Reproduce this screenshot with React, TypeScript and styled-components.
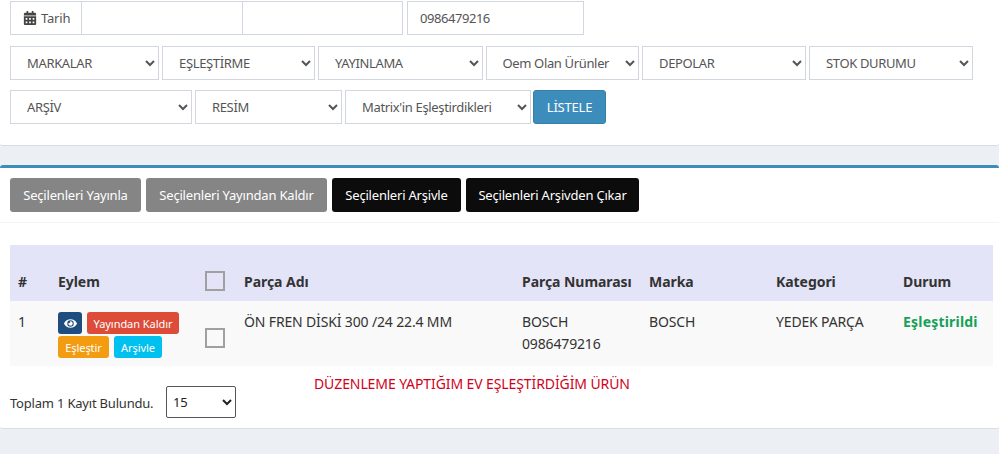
import styled, { createGlobalStyle } from "styled-components"
import { FaCalendarAlt, FaEye } from "react-icons/fa"

const GlobalStyle = createGlobalStyle`
html,body{
  margin:0;
  padding:0;
  background:#ecf0f5;
  font-family:"Noto Sans","Liberation Sans",sans-serif;
  font-size:13px;
  letter-spacing:-0.2px;
  color:#333;
}
*{box-sizing:border-box;}
button,input,select{letter-spacing:inherit;}
`

const filterRow2 = [
  { label: "MARKALAR", width: 149 },
  { label: "EŞLEŞTİRME", width: 153 },
  { label: "YAYINLAMA", width: 164.5 },
  { label: "Oem Olan Ürünler", width: 153.5 },
  { label: "DEPOLAR", width: 164 },
  { label: "STOK DURUMU", width: 164 },
]

const filterRow3 = [
  { label: "ARŞİV", width: 182 },
  { label: "RESİM", width: 147 },
  { label: "Matrix'in Eşleştirdikleri", width: 186 },
]

const App = () => {
  return (
    <Page>
      <GlobalStyle />
      <FilterPanel>
        <Row>
          <DateGroup>
            <Addon>
              <FaCalendarAlt />
              Tarih
            </Addon>
            <TextInput $width={162} readOnly />
            <TextInput $width={161} readOnly />
          </DateGroup>
          <TextInput $width={177} readOnly value="0986479216" />
        </Row>
        <Row>
          {filterRow2.map((item) => (
            <Select key={item.label} $width={item.width}>
              <option>{item.label}</option>
            </Select>
          ))}
        </Row>
        <Row>
          {filterRow3.map((item) => (
            <Select key={item.label} $width={item.width}>
              <option>{item.label}</option>
            </Select>
          ))}
          <ListButton>LİSTELE</ListButton>
        </Row>
      </FilterPanel>

      <ResultPanel>
        <Toolbar>
          <BulkButton $bg="#858585" $width={131}>Seçilenleri Yayınla</BulkButton>
          <BulkButton $bg="#858585" $width={181}>Seçilenleri Yayından Kaldır</BulkButton>
          <BulkButton $bg="#0c0c0c" $width={129}>Seçilenleri Arşivle</BulkButton>
          <BulkButton $bg="#0c0c0c" $width={173}>Seçilenleri Arşivden Çıkar</BulkButton>
        </Toolbar>

        <Body>
          <Table>
            <colgroup>
              <col width={40} />
              <col width={147} />
              <col width={39} />
              <col width={278} />
              <col width={127} />
              <col width={127} />
              <col width={127} />
              <col width={98} />
            </colgroup>
            <thead>
              <tr>
                <Th>#</Th>
                <Th>Eylem</Th>
                <Th><Check /></Th>
                <Th>Parça Adı</Th>
                <Th>Parça Numarası</Th>
                <Th>Marka</Th>
                <Th>Kategori</Th>
                <Th>Durum</Th>
              </tr>
            </thead>
            <tbody>
              <tr>
                <Td>1</Td>
                <ActionTd>
                  <Actions>
                    <ActionButton $bg="#204d7f" $width={24}><FaEye /></ActionButton>
                    <ActionButton $bg="#dd4b39" $width={92}>Yayından Kaldır</ActionButton>
                    <ActionButton $bg="#f39c12" $width={51}>Eşleştir</ActionButton>
                    <ActionButton $bg="#00c0ef" $width={48}>Arşivle</ActionButton>
                  </Actions>
                </ActionTd>
                <CheckTd><Check /></CheckTd>
                <Td>ÖN FREN DİSKİ 300 /24 22.4 MM</Td>
                <Td>BOSCH<br />0986479216</Td>
                <Td>BOSCH</Td>
                <Td>YEDEK PARÇA</Td>
                <Td><Status>Eşleştirildi</Status></Td>
              </tr>
            </tbody>
          </Table>

          <Footer>
            <Total>Toplam 1 Kayıt Bulundu.</Total>
            <PageSize>
              <option>15</option>
            </PageSize>
            <Note>DÜZENLEME YAPTIĞIM EV EŞLEŞTİRDİĞİM ÜRÜN</Note>
          </Footer>
        </Body>
      </ResultPanel>
    </Page>
  )
}

export default App

const Page = styled.div`
width:999px;
height:454px;
overflow:hidden;
display:flex;
flex-direction:column;
gap:19px;
`

const FilterPanel = styled.div`
height:146px;
background:#fff;
border-bottom:1px solid #d9dde2;
border-radius:0 0 3px 3px;
padding:1px 10px 0;
display:flex;
flex-direction:column;
gap:11px;
`

const Row = styled.div`
display:flex;
gap:3px;
height:34px;

&:last-child{
  margin-top:-1px;
}
`

const DateGroup = styled.div`
display:flex;
margin-right:2px;
`

const Addon = styled.div`
width:72px;
height:34px;
border:1px solid #d2d6de;
display:flex;
align-items:center;
gap:4px;
padding-left:12px;
font-size:13px;
color:#555;

svg{
  font-size:14px;
  color:#444;
}
`

const TextInput = styled.input<{ $width: number }>`
width:${(p) => p.$width}px;
height:34px;
border:1px solid #d2d6de;
margin-left:-1px;
padding:0 12px;
font-family:inherit;
font-size:13px;
letter-spacing:-0.45px;
color:#555;
outline:none;
background:#fff;
`

const Select = styled.select<{ $width: number }>`
width:${(p) => p.$width}px;
height:34px;
border:1px solid #d2d6de;
border-radius:0;
padding:0 8px 0 12px;
font-family:inherit;
font-size:13px;
letter-spacing:-0.35px;
color:#555;
background:#fff;
outline:none;
`

const ListButton = styled.button`
width:73px;
height:34px;
margin-left:-1px;
background:#3c8dbc;
border:1px solid #367fa9;
border-radius:3px;
color:#fff;
font-family:inherit;
font-size:13px;
padding:0;
`

const ResultPanel = styled.div`
height:264px;
background:#fff;
border-top:3px solid #3c8dbc;
border-bottom:1px solid #d9dde2;
border-radius:3px;
`

const Toolbar = styled.div`
height:55px;
padding:10px 10px 0;
display:flex;
gap:5px;
border-bottom:1px solid #f4f4f4;
`

const BulkButton = styled.button<{ $bg: string; $width: number }>`
width:${(p) => p.$width}px;
height:34px;
background:${(p) => p.$bg};
border:none;
border-radius:3px;
color:#fff;
font-family:inherit;
font-size:13px;
padding:0;
white-space:nowrap;
`

const Body = styled.div`
padding:22px 6px 0 10px;
`

const Table = styled.table`
width:983px;
table-layout:fixed;
border-collapse:collapse;
`

const Th = styled.th`
height:56px;
background:#e4e4f8;
padding:8px 8px 10px;
text-align:left;
vertical-align:bottom;
font-size:14px;
font-weight:700;
letter-spacing:-0.05px;
color:#333;
white-space:nowrap;
`

const Td = styled.td`
height:65px;
background:#f9f9f9;
padding:10px 8px 8px;
vertical-align:top;
font-size:14px;
letter-spacing:-0.15px;
line-height:22px;
color:#333;
`

const ActionTd = styled(Td)`
padding-top:11px;
`

const CheckTd = styled(Td)`
vertical-align:bottom;
padding-bottom:18px;
`

const Check = styled.span`
display:block;
width:20px;
height:20px;
border:2px solid #a0a0a0;
`

const Actions = styled.div`
display:flex;
flex-wrap:wrap;
gap:2px 5px;
`

const ActionButton = styled.button<{ $bg: string; $width: number }>`
width:${(p) => p.$width}px;
height:22px;
background:${(p) => p.$bg};
border:none;
border-radius:3px;
color:#fff;
font-family:inherit;
font-size:11px;
letter-spacing:-0.05px;
padding:0;
display:flex;
align-items:center;
justify-content:center;
white-space:nowrap;

svg{
  font-size:13px;
}
`

const Status = styled.span`
color:#16a05a;
font-weight:700;
letter-spacing:0.2px;
`

const Footer = styled.div`
display:flex;
align-items:flex-start;
padding-top:20px;
`

const Total = styled.div`
width:156px;
margin-top:7px;
line-height:20px;
font-size:13px;
color:#333;
white-space:nowrap;
`

const PageSize = styled.select`
width:70px;
height:32px;
border:1px solid #555;
border-radius:2px;
background:#fff;
padding:0 2px;
font-family:inherit;
font-size:13px;
color:#222;
`

const Note = styled.div`
margin:-12px 0 0 78px;
line-height:20px;
font-size:14px;
letter-spacing:-0.1px;
color:#d0021b;
white-space:nowrap;
`
